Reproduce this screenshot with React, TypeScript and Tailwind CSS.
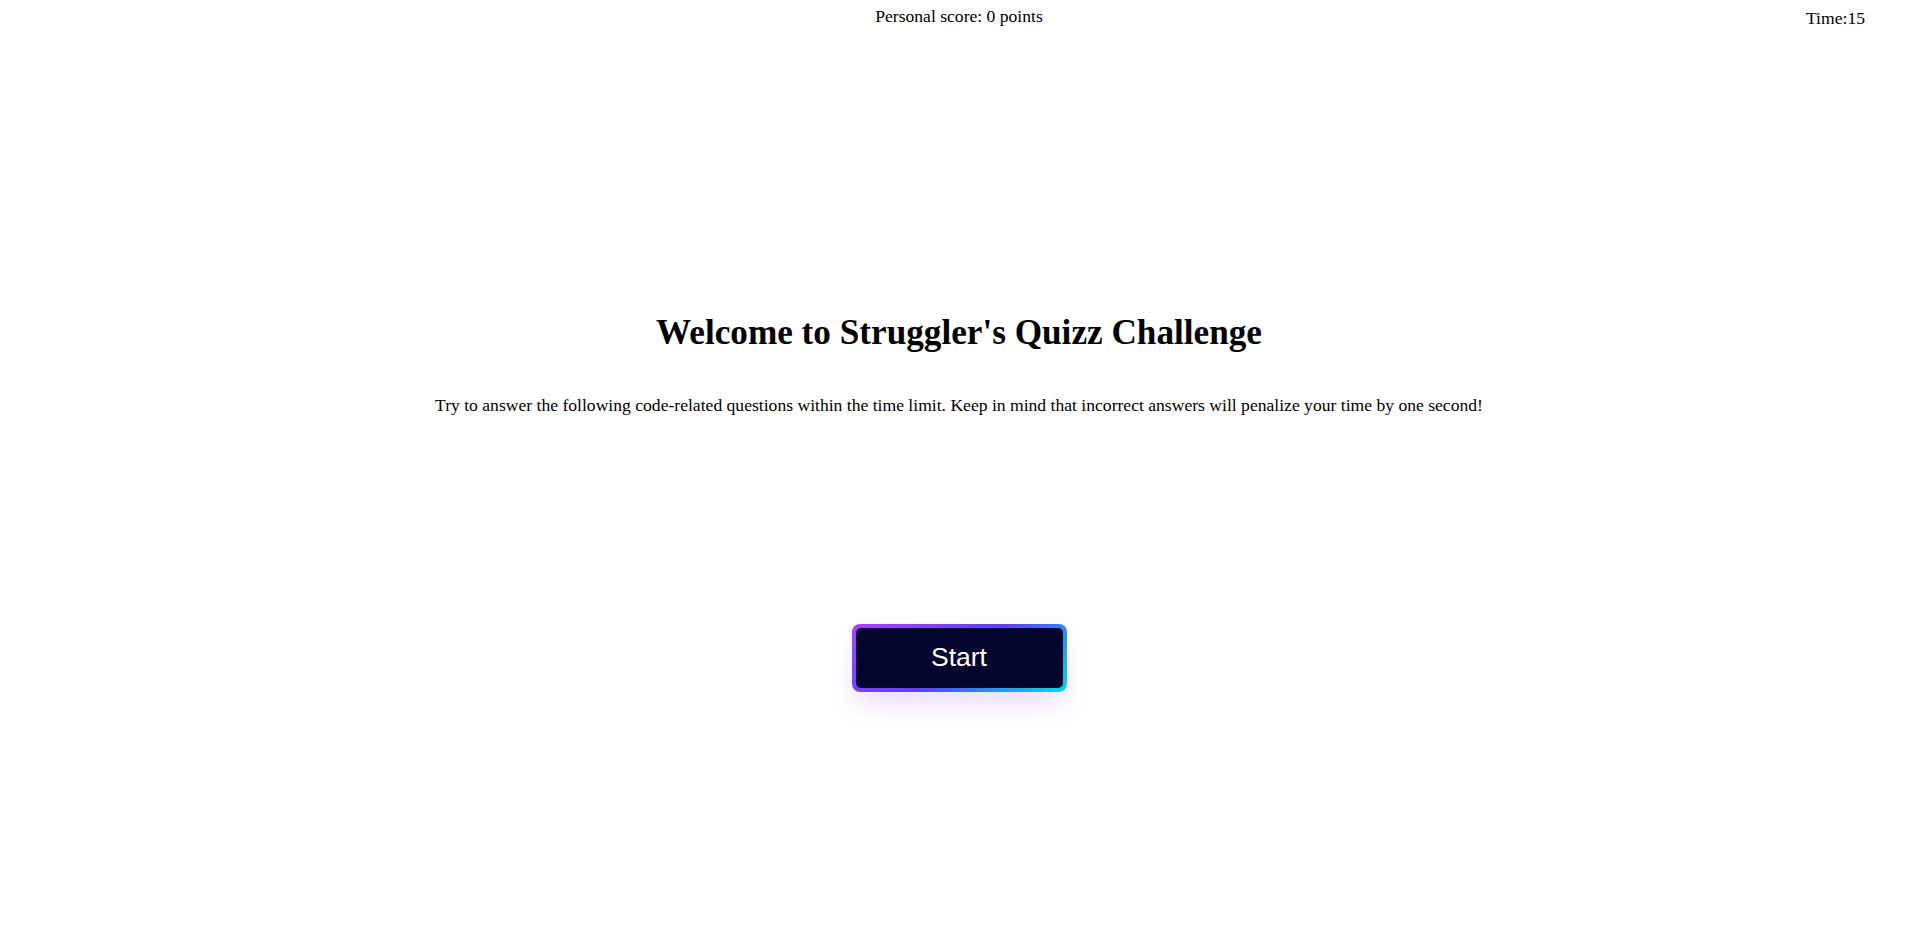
import React from "react";

const App = () => {
  return (
    <div className="min-h-screen bg-white text-black font-['Liberation_Serif','Times_New_Roman',serif]">
      {/* Top bar */}
      <header className="grid grid-cols-3">
        <div />
        <p className="text-center text-[17.6px] leading-[20px] pt-[6px]">Personal score: 0 points</p>
        <p className="justify-self-end text-[17.6px] leading-[20px] pt-[8px] pr-[53px]">Time:15</p>
      </header>

      {/* Intro */}
      <main className="flex flex-col items-center">
        <h1 className="mt-[285px] text-[35.2px] leading-[40px] font-bold">
          Welcome to Struggler's Quizz Challenge
        </h1>
        <p className="mt-[42px] text-[17.6px] leading-[20px]">
          Try to answer the following code-related questions within the time limit. Keep in mind that incorrect answers will penalize your time by one second!
        </p>

        <button
          type="button"
          className="mt-[209px] w-[215px] h-[68px] p-[4px] rounded-[8px] bg-[linear-gradient(144deg,#af40ff,#5b42f3_50%,#00ddeb)] shadow-[0_15px_30px_-5px_rgba(151,65,252,0.2)]"
        >
          <span className="flex h-full w-full items-center justify-center rounded-[5px] bg-[#05062d] text-white text-[26.5px] font-['Liberation_Sans',Arial,sans-serif]">
            Start
          </span>
        </button>
      </main>
    </div>
  );
};

export default App;
